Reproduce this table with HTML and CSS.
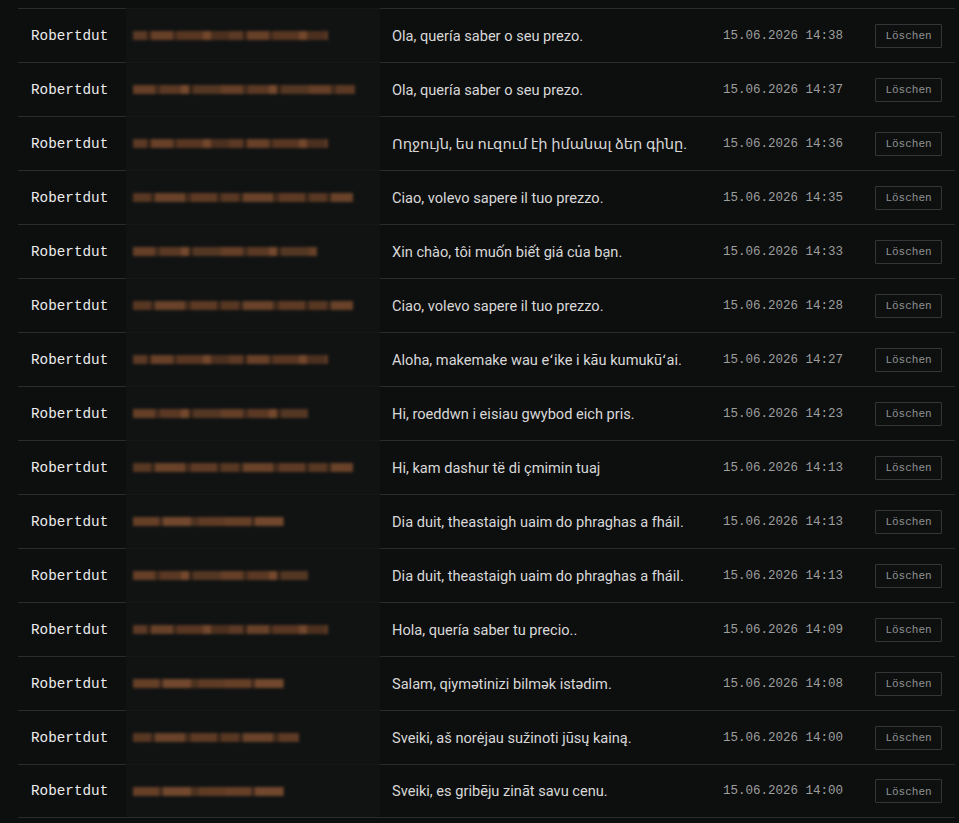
FILE: index.html
```html
<!DOCTYPE html>
<html lang="de">
<head>
<meta charset="utf-8">
<title>Nachrichten</title>
<link rel="stylesheet" href="styles.css">
</head>
<body>
<div class="list">
  <div class="row"><div class="name">Robertdut</div><div class="mail"><span class="blur b1" style="width:195px"></span></div><div class="msg">Ola, quería saber o seu prezo.</div><div class="date">15.06.2026 14:38</div><div class="act"><button class="del">Löschen</button></div></div>
  <div class="row"><div class="name">Robertdut</div><div class="mail"><span class="blur b2" style="width:222px"></span></div><div class="msg">Ola, quería saber o seu prezo.</div><div class="date">15.06.2026 14:37</div><div class="act"><button class="del">Löschen</button></div></div>
  <div class="row"><div class="name">Robertdut</div><div class="mail"><span class="blur b1" style="width:195px"></span></div><div class="msg">Ողջույն, ես ուզում էի իմանալ ձեր գինը.</div><div class="date">15.06.2026 14:36</div><div class="act"><button class="del">Löschen</button></div></div>
  <div class="row"><div class="name">Robertdut</div><div class="mail"><span class="blur b3" style="width:220px"></span></div><div class="msg">Ciao, volevo sapere il tuo prezzo.</div><div class="date">15.06.2026 14:35</div><div class="act"><button class="del">Löschen</button></div></div>
  <div class="row"><div class="name">Robertdut</div><div class="mail"><span class="blur b2" style="width:184px"></span></div><div class="msg">Xin chào, tôi muốn biết giá của bạn.</div><div class="date">15.06.2026 14:33</div><div class="act"><button class="del">Löschen</button></div></div>
  <div class="row"><div class="name">Robertdut</div><div class="mail"><span class="blur b3" style="width:220px"></span></div><div class="msg">Ciao, volevo sapere il tuo prezzo.</div><div class="date">15.06.2026 14:28</div><div class="act"><button class="del">Löschen</button></div></div>
  <div class="row"><div class="name">Robertdut</div><div class="mail"><span class="blur b1" style="width:195px"></span></div><div class="msg">Aloha, makemake wau eʻike i kāu kumukūʻai.</div><div class="date">15.06.2026 14:27</div><div class="act"><button class="del">Löschen</button></div></div>
  <div class="row"><div class="name">Robertdut</div><div class="mail"><span class="blur b2" style="width:175px"></span></div><div class="msg">Hi, roeddwn i eisiau gwybod eich pris.</div><div class="date">15.06.2026 14:23</div><div class="act"><button class="del">Löschen</button></div></div>
  <div class="row"><div class="name">Robertdut</div><div class="mail"><span class="blur b3" style="width:220px"></span></div><div class="msg">Hi, kam dashur të di çmimin tuaj</div><div class="date">15.06.2026 14:13</div><div class="act"><button class="del">Löschen</button></div></div>
  <div class="row"><div class="name">Robertdut</div><div class="mail"><span class="blur b4" style="width:151px"></span></div><div class="msg">Dia duit, theastaigh uaim do phraghas a fháil.</div><div class="date">15.06.2026 14:13</div><div class="act"><button class="del">Löschen</button></div></div>
  <div class="row"><div class="name">Robertdut</div><div class="mail"><span class="blur b2" style="width:175px"></span></div><div class="msg">Dia duit, theastaigh uaim do phraghas a fháil.</div><div class="date">15.06.2026 14:13</div><div class="act"><button class="del">Löschen</button></div></div>
  <div class="row"><div class="name">Robertdut</div><div class="mail"><span class="blur b1" style="width:195px"></span></div><div class="msg">Hola, quería saber tu precio..</div><div class="date">15.06.2026 14:09</div><div class="act"><button class="del">Löschen</button></div></div>
  <div class="row"><div class="name">Robertdut</div><div class="mail"><span class="blur b4" style="width:151px"></span></div><div class="msg">Salam, qiymətinizi bilmək istədim.</div><div class="date">15.06.2026 14:08</div><div class="act"><button class="del">Löschen</button></div></div>
  <div class="row"><div class="name">Robertdut</div><div class="mail"><span class="blur b3" style="width:166px"></span></div><div class="msg">Sveiki, aš norėjau sužinoti jūsų kainą.</div><div class="date">15.06.2026 14:00</div><div class="act"><button class="del">Löschen</button></div></div>
  <div class="row"><div class="name">Robertdut</div><div class="mail"><span class="blur b4" style="width:151px"></span></div><div class="msg">Sveiki, es gribēju zināt savu cenu.</div><div class="date">15.06.2026 14:00</div><div class="act"><button class="del">Löschen</button></div></div>
</div>
</body>
</html>
```
FILE: styles.css
```css
html, body {
  margin: 0;
  padding: 0;
  background: #0d0e0e;
}
body {
  padding: 8px 4px 0 18px;
  font-family: Roboto, "DejaVu Sans", sans-serif;
}
.list {
  display: flex;
  flex-direction: column;
}
.row {
  display: grid;
  grid-template-columns: 108px 254px 331px 152px 1fr;
  height: 54px;
  border-top: 1px solid #2a2c2c;
  box-sizing: border-box;
  align-items: center;
}
.row:last-child {
  border-bottom: 1px solid #2a2c2c;
}
.name {
  padding-left: 13px;
  font-family: "Liberation Mono", monospace;
  font-size: 14.3px;
  color: #ececec;
}
.mail {
  align-self: stretch;
  margin-top: -1px;
  background: #111313;
  border-top: 1px solid #151717;
  display: flex;
  align-items: center;
  padding-left: 7px;
}
.blur {
  display: block;
  height: 9px;
  filter: blur(1.8px);
  opacity: 0.8;
}
.b1 {
  background: repeating-linear-gradient(90deg, #6e4329 0 14px, #3a2518 14px 18px, #7d4c2e 18px 40px, #4a2f1e 40px 44px, #6a3f26 44px 70px, #8a5432 70px 78px, #5a3722 78px 96px);
}
.b2 {
  background: repeating-linear-gradient(90deg, #7a4a2c 0 22px, #4b3020 22px 27px, #6d4228 27px 48px, #8c5634 48px 56px, #3c2719 56px 60px, #654028 60px 88px);
}
.b3 {
  background: repeating-linear-gradient(90deg, #6a4027 0 18px, #3e2a1c 18px 22px, #7f4e2f 22px 52px, #4a2f1e 52px 58px, #714429 58px 84px, #3e2a1c 84px 88px);
}
.b4 {
  background: repeating-linear-gradient(90deg, #7c4b2d 0 26px, #4c3121 26px 30px, #8a5534 30px 58px, #5c3a24 58px 66px, #734628 66px 92px);
}
.msg {
  padding-left: 12px;
  font-size: 14.6px;
  color: #d8d8d8;
  white-space: nowrap;
}
.date {
  padding-left: 12px;
  font-family: "Liberation Mono", monospace;
  font-size: 12.5px;
  color: #9d9f9f;
}
.act {
  padding-left: 12px;
}
.del {
  display: block;
  width: 67px;
  height: 24px;
  padding: 1px 0 0;
  background: #0e1010;
  border: 1px solid #333636;
  border-radius: 1px;
  color: #8e9191;
  font-family: "Liberation Mono", monospace;
  font-size: 11px;
  cursor: pointer;
}
```
